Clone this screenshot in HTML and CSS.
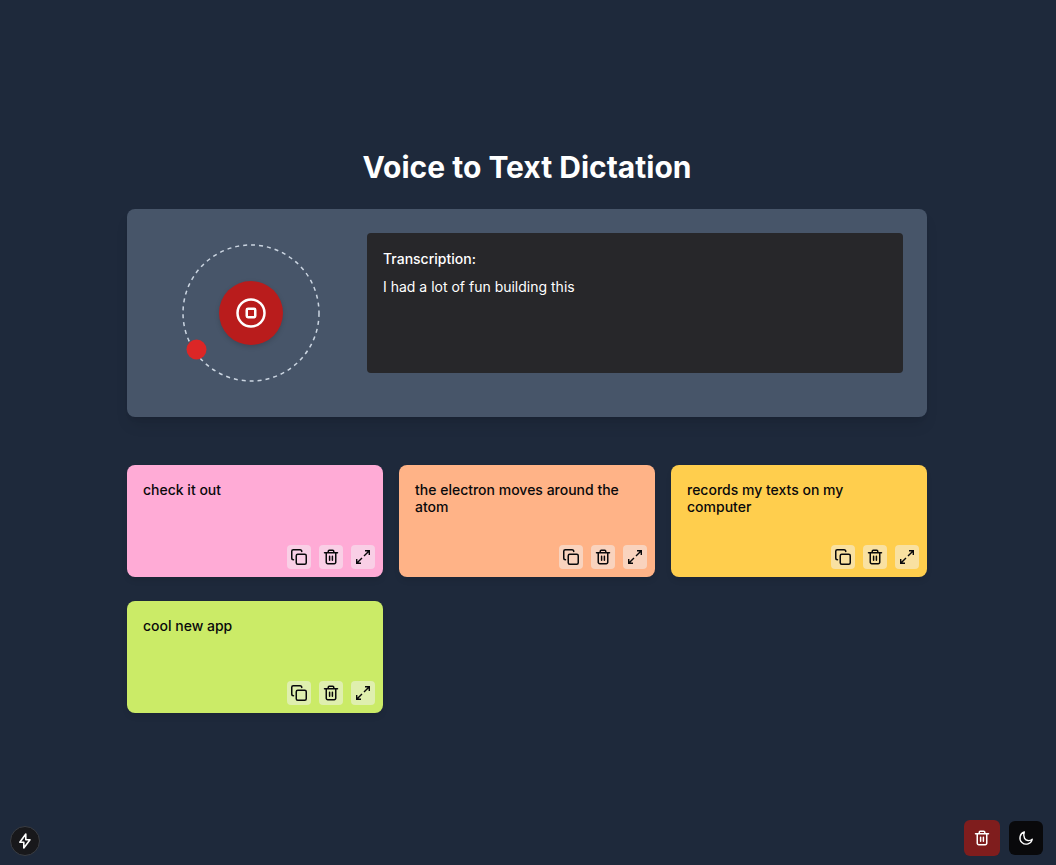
FILE: index.html
```html
<!DOCTYPE html>
<html lang="en">
<head>
<meta charset="utf-8">
<meta name="viewport" content="width=device-width, initial-scale=1">
<title>Voice to Text Dictation</title>
<link rel="stylesheet" href="styles.css">
</head>
<body>
<svg class="sprite" aria-hidden="true">
  <symbol id="copy" viewBox="0 0 16 16"><g stroke-width="1.5"><rect x="5.250" y="5.250" width="10" height="10" rx="1.500"/><path d="M2.500 10.750C1.500 10.750.75 10 .75 9V2.250C.75 1.400 1.400.75 2.250.75H9c1 0 1.750.75 1.750 1.750"/></g></symbol>
  <symbol id="trash" viewBox="0 0 16 16"><path stroke-width="1.500" d="M1.500 3.750h13M3.250 3.750v9.500a1.500 1.500 0 0 0 1.500 1.500h6.500a1.500 1.500 0 0 0 1.500-1.500v-9.500M5.250 3.500V2.250a1 1 0 0 1 1-1h3.500a1 1 0 0 1 1 1V3.500M6.600 7.250v4M9.400 7.250v4"/></symbol>
  <symbol id="expand" viewBox="0 0 16 16"><path stroke-width="1.400" stroke-linecap="butt" stroke-linejoin="miter" d="M10 1.700H14.300V6M14.300 1.700 9 7M1.700 10V14.300H6M1.700 14.300 7 9"/></symbol>
</svg>
<main class="page">
  <h1 class="title">Voice to Text Dictation</h1>
  <section class="panel">
    <div class="recorder">
      <svg class="orbit" viewBox="0 0 140 140" aria-hidden="true">
        <circle class="orbit-path" cx="70" cy="70" r="68"/>
        <circle class="electron" cx="15.500" cy="106.500" r="10"/>
      </svg>
      <button class="record" type="button" aria-label="Stop recording">
        <svg viewBox="0 0 32 32"><circle cx="16" cy="16" r="13.500"/><rect x="11.750" y="11.750" width="8.500" height="8.500" rx="1.200"/></svg>
      </button>
    </div>
    <div class="transcript">
      <h2 class="label">Transcription:</h2>
      <p class="speech">I had a lot of fun building this</p>
    </div>
  </section>
  <section class="notes">
    <article class="note pink">
      <p class="text">check it out</p>
      <div class="actions">
        <button type="button" aria-label="Copy"><svg><use href="#copy"/></svg></button>
        <button type="button" aria-label="Delete"><svg><use href="#trash"/></svg></button>
        <button type="button" aria-label="Expand"><svg><use href="#expand"/></svg></button>
      </div>
    </article>
    <article class="note orange">
      <p class="text">the electron moves around the atom</p>
      <div class="actions">
        <button type="button" aria-label="Copy"><svg><use href="#copy"/></svg></button>
        <button type="button" aria-label="Delete"><svg><use href="#trash"/></svg></button>
        <button type="button" aria-label="Expand"><svg><use href="#expand"/></svg></button>
      </div>
    </article>
    <article class="note yellow">
      <p class="text">records my texts on my computer</p>
      <div class="actions">
        <button type="button" aria-label="Copy"><svg><use href="#copy"/></svg></button>
        <button type="button" aria-label="Delete"><svg><use href="#trash"/></svg></button>
        <button type="button" aria-label="Expand"><svg><use href="#expand"/></svg></button>
      </div>
    </article>
    <article class="note green">
      <p class="text">cool new app</p>
      <div class="actions">
        <button type="button" aria-label="Copy"><svg><use href="#copy"/></svg></button>
        <button type="button" aria-label="Delete"><svg><use href="#trash"/></svg></button>
        <button type="button" aria-label="Expand"><svg><use href="#expand"/></svg></button>
      </div>
    </article>
  </section>
</main>
<button class="flash" type="button" aria-label="Status"><svg viewBox="0 0 18 18"><path d="M9.800 2 3.800 10.200H7.800V16L14 7.800H9.800Z"/></svg></button>
<div class="corner">
  <button class="clear" type="button" aria-label="Delete all notes"><svg><use href="#trash"/></svg></button>
  <button class="theme" type="button" aria-label="Toggle theme"><svg viewBox="0 0 16 16"><path d="M6.300 2A6.200 6.200 0 1 0 14.200 9.300C11.500 11.500 8 10.800 6.600 8.300C5.500 6.300 5.500 4 6.300 2Z"/></svg></button>
</div>
</body>
</html>
```
FILE: styles.css
```css
* { box-sizing: border-box; }
body {
  margin: 0;
  min-height: 100vh;
  background: #1e293b;
  color: #fff;
  font-family: Inter, "Liberation Sans", sans-serif;
}
h1, h2, p { margin: 0; }
button {
  display: flex;
  align-items: center;
  justify-content: center;
  border: 0;
  padding: 0;
  color: inherit;
  cursor: pointer;
}
svg {
  fill: none;
  stroke: currentColor;
  stroke-width: 2;
  stroke-linecap: round;
  stroke-linejoin: round;
}
.sprite { position: absolute; width: 0; height: 0; }
.page {
  width: 100%;
  max-width: 802px;
  margin: 0 auto;
  padding: 149px 2px 24px 0;
}
.title {
  margin-bottom: 24px;
  font-size: 30px;
  line-height: 36px;
  font-weight: 700;
  text-align: center;
}
.panel {
  display: flex;
  align-items: flex-start;
  gap: 16px;
  padding: 24px;
  border-radius: 8px;
  background: #475569;
  box-shadow: 0 10px 15px -3px #0000001a, 0 4px 6px -4px #0000001a;
}
.recorder {
  display: grid;
  place-items: center;
  width: 200px;
  height: 160px;
  flex: none;
}
.orbit, .record { grid-area: 1 / 1; }
.orbit { width: 140px; height: 140px; }
.orbit-path {
  stroke: #cbd5e1;
  stroke-width: 1.5;
  stroke-dasharray: 4 4;
  stroke-linecap: butt;
}
.electron { fill: #dc2626; stroke: none; }
.record {
  width: 64px;
  height: 64px;
  border-radius: 50%;
  background: #b91c1c;
  box-shadow: 0 2px 5px #00000026;
}
.record svg { width: 32px; height: 32px; stroke-width: 2.5; }
.transcript {
  flex: 1;
  min-height: 140px;
  padding: 16px;
  border-radius: 4px;
  background: #27272a;
  font-size: 14px;
  line-height: 20px;
}
.label { margin-bottom: 8px; font-size: 14px; font-weight: 500; }
.notes {
  display: grid;
  grid-template-columns: repeat(auto-fill, minmax(240px, 1fr));
  gap: 24px 16px;
  margin-top: 48px;
}
.note {
  display: flex;
  flex-direction: column;
  justify-content: space-between;
  min-height: 112px;
  padding: 16px 8px 8px 16px;
  border-radius: 8px;
  color: #09090b;
  box-shadow: 0 4px 6px -1px #0000001a;
}
.text { padding-right: 8px; font-size: 14px; line-height: 17px; font-weight: 500; }
.pink { background: #ffabd6; }
.orange { background: #ffb387; }
.yellow { background: #ffce4d; }
.green { background: #cbeb67; }
.actions { display: flex; justify-content: flex-end; gap: 8px; }
.actions button {
  width: 24px;
  height: 24px;
  border-radius: 4px;
  background: #f4f4f580;
}
.actions svg { width: 16px; height: 16px; }
.flash {
  position: fixed;
  left: 10px;
  bottom: 9px;
  width: 30px;
  height: 30px;
  border: 1px solid #3a3d43;
  border-radius: 50%;
  background: #18181b;
}
.flash svg { width: 18px; height: 18px; flex: none; stroke-width: 1.6; }
.corner {
  position: fixed;
  right: 13px;
  bottom: 9px;
  display: flex;
  align-items: center;
  gap: 9px;
}
.corner svg { width: 16px; height: 16px; }
.clear { width: 36px; height: 36px; border-radius: 6px; background: #7f1d1d; }
.theme { width: 34px; height: 34px; border-radius: 6px; background: #09090b; }
.theme svg { stroke-width: 1.4; }
```
